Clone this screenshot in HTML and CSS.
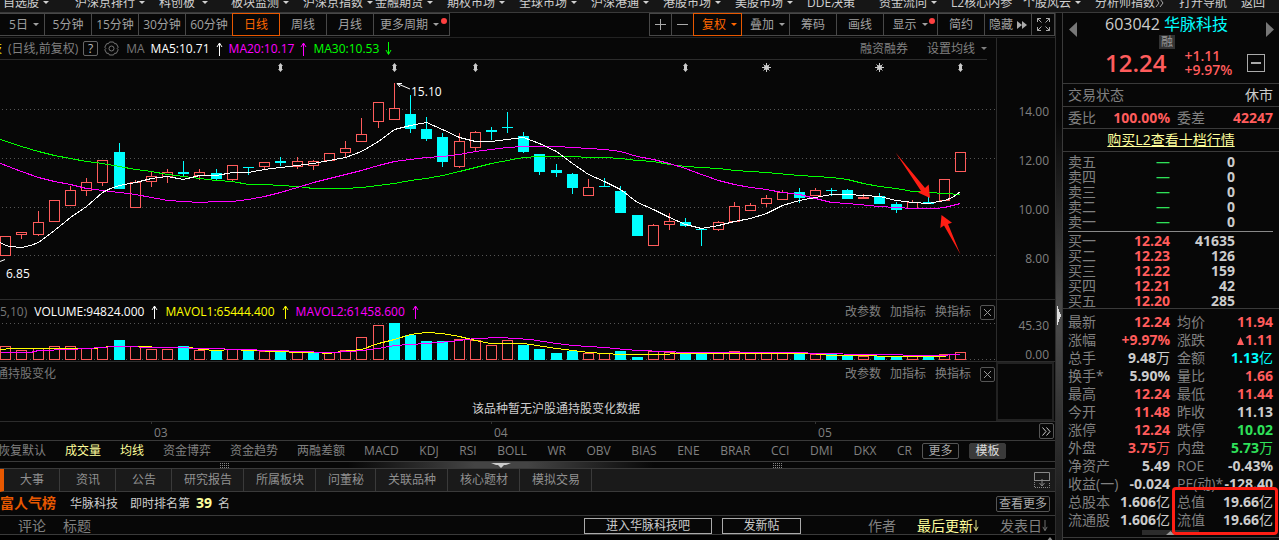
FILE: index.html
```html
<!DOCTYPE html>
<html lang="zh-CN">
<head>
<meta charset="utf-8">
<title>华脉科技 603042</title>
<link rel="stylesheet" href="styles.css">
</head>
<body>
<svg class="defs" aria-hidden="true">
  <symbol id="up" viewBox="0 0 7 14"><path d="M3.5 14V1M3.5 1L1 5M3.5 1L6 5" fill="none" stroke="currentColor"/></symbol>
  <symbol id="down" viewBox="0 0 7 14"><path d="M3.5 0V12M3.5 12.500L1 8M3.500 12.500L6 8" fill="none" stroke="currentColor"/></symbol>
  <symbol id="close" viewBox="0 0 15 15"><rect x=".5" y=".5" width="14" height="14" rx="1.500" fill="none" stroke="#555"/><path d="M4 4L11 11M11 4L4 11" stroke="#999" fill="none"/></symbol>
  <symbol id="grip" viewBox="0 0 9 5"><path d="M0 .5H9M0 2.500H9M0 4.500H9" stroke="#888" stroke-dasharray="1 1"/></symbol>
</svg>

<nav class="menu">
  <button class="drop">自选股</button>
  <button class="drop wide">沪深京排行</button>
  <button class="drop far">科创板</button>
  <button class="drop">板块监测</button>
  <button class="drop">沪深京指数</button>
  <button class="drop">金融期货</button>
  <button class="drop">期权市场</button>
  <button class="drop">全球市场</button>
  <button class="drop">沪深港通</button>
  <button class="drop">港股市场</button>
  <button class="drop">美股市场</button>
  <button>DDE决策</button>
  <button class="drop">资金流向</button>
  <button>L2核心内参</button>
  <button class="drop">个股风云</button>
  <button class="wide">分析师指数<svg width="9" height="8" viewBox="0 0 9 8"><path d="M1 0L4 4L1 8M5 0L8 4L5 8" fill="none" stroke="#aaa"/></svg></button>
  <button class="short">打开导航</button>
  <button class="last">返回</button>
</nav>

<div class="workspace">
<main class="main">
  <div class="toolbar">
    <div class="group periods">
      <button class="drop">5日</button><button>5分钟</button><button>15分钟</button><button>30分钟</button><button>60分钟</button><button class="on">日线</button><button>周线</button><button>月线</button><button class="drop more dot">更多周期</button>
    </div>
    <div class="group tools">
      <button class="zoom" aria-label="放大"><svg width="11" height="11"><path d="M0 5.500H11M5.500 0V11" stroke="#aaa"/></svg></button>
      <button class="zoom" aria-label="缩小"><svg width="11" height="11"><path d="M0 5.500H11" stroke="#aaa"/></svg></button>
      <button class="drop on">复权</button>
      <button class="drop">叠加</button>
      <button>筹码</button>
      <button>画线</button>
      <button class="drop show dot">显示</button>
      <button>简约</button>
      <button>隐藏<svg class="ff" width="10" height="8"><path d="M0 0L5 4L0 8ZM5 0L10 4L5 8Z" fill="#aaa"/></svg></button>
      <button class="full" aria-label="全屏"><svg width="13" height="13" fill="none" stroke="#aaa"><path d="M.5 4V.5H4M.5 .5L4.500 4.500M9 .5H12.500V4M12.500 .5L8.500 4.500M.5 9V12.500H4M.5 12.500L4.500 8.500M9 12.500H12.500V9M12.500 12.500L8.500 8.500"/></svg></button>
    </div>
  </div>

  <section class="pane price">
    <div class="plot">
      <div class="legend">
        <span class="stock yellow">技</span>
        <span class="period">(日线,前复权)</span>
        <button class="help">?</button>
        <button class="gear" aria-label="设置"><svg width="15" height="15" fill="none" stroke="#777"><path d="M5.500 1H9.500L10.500 2.700H12.300L14.200 6.200L13.200 7.500L14.200 8.800L12.300 12.300H10.500L9.500 14H5.500L4.500 12.300H2.700L.8 8.800L1.800 7.500L.8 6.200L2.700 2.700H4.500Z"/><circle cx="7.500" cy="7.500" r="2.500"/></svg></button>
        <span class="muted">MA</span>
        <span class="series white">MA5:10.71<svg width="7" height="14"><use href="#up"/></svg></span>
        <span class="series magenta">MA20:10.17<svg width="7" height="14"><use href="#up"/></svg></span>
        <span class="series green">MA30:10.53<svg width="7" height="14"><use href="#down"/></svg></span>
        <div class="links"><button>融资融券</button><button class="drop">设置均线</button></div>
      </div>
      <svg class="chart" id="candles" height="239">
        <g class="grid">
          <line x1="2" x2="100%" y1="49.500" y2="49.500"/><line x1="2" x2="100%" y1="98.500" y2="98.500"/><line x1="2" x2="100%" y1="147.500" y2="147.500"/><line x1="2" x2="100%" y1="195.500" y2="195.500"/>
        </g>
        <g class="bars"></g>
        <g class="lines"></g>
        <g class="marks"></g>
        <path d="M0 201.500L5 199.500" stroke="#fff"/>
        <text x="6" y="218">6.85</text>
        <path d="M397 23.500L410 29M397 23.500H402M397 23.500L400 27" stroke="#fff" fill="none"/>
        <text x="411" y="36">15.10</text>
        <path class="pointer" d="M895.500 92.500L925 128L928.700 124.500L930 138L918 132.500L921 131Z"/>
        <path class="pointer" d="M941.500 155L952 162.700L948 164L960.500 194.500L944 165.500L940.300 168Z"/>
      </svg>
    </div>
    <div class="axis price-axis"><span>14.00</span><span>12.00</span><span>10.00</span><span>8.00</span></div>
  </section>

  <section class="pane volume">
    <div class="plot">
      <div class="legend">
        <span class="muted">5,10)</span>
        <span class="series white">VOLUME:94824.000<svg width="7" height="14"><use href="#up"/></svg></span>
        <span class="series yellow">MAVOL1:65444.400<svg width="7" height="14"><use href="#up"/></svg></span>
        <span class="series magenta">MAVOL2:61458.600<svg width="7" height="14"><use href="#up"/></svg></span>
        <div class="links tight"><button>改参数</button><button>加指标</button><button>换指标</button><button class="close" aria-label="关闭"><svg width="15" height="15"><use href="#close"/></svg></button></div>
      </div>
      <svg class="chart" id="volumes" height="38">
        <g class="grid"><line x1="2" x2="100%" y1=".5" y2=".5"/><line x1="2" x2="100%" y1="36.500" y2="36.500"/></g>
        <g class="bars"></g>
        <g class="lines"></g>
      </svg>
    </div>
    <div class="axis volume-axis"><span>45.30</span><span>0.00</span></div>
  </section>

  <section class="pane holding">
    <div class="plot">
      <div class="legend">
        <span class="muted cut">通持股变化</span>
        <div class="links tight"><button>改参数</button><button>加指标</button><button>换指标</button><button class="close" aria-label="关闭"><svg width="15" height="15"><use href="#close"/></svg></button></div>
      </div>
      <p class="empty">该品种暂无沪股通持股变化数据</p>
    </div>
    <div class="axis blank"></div>
  </section>

  <div class="dates">
    <span class="march">03</span><span class="april">04</span><span class="may">05</span>
    <button aria-label="后移"><svg width="9" height="9"><path d="M.5 .5L4 4.500L.5 8.500M4.500 .5L8 4.500L4.500 8.500" fill="none" stroke="#ccc"/></svg></button>
  </div>

  <div class="indicators">
    <button>恢复默认</button><button class="sel">成交量</button><button class="sel">均线</button><button>资金博弈</button><button>资金趋势</button><button>两融差额</button>
    <div class="formulas"><button>MACD</button><button>KDJ</button><button>RSI</button><button>BOLL</button><button>WR</button><button>OBV</button><button>BIAS</button><button>ENE</button><button>BRAR</button><button>CCI</button><button>DMI</button><button>DKX</button><button>CR</button></div>
    <button class="boxed">更多</button><button class="boxed filled">模板</button>
  </div>

  <div class="splitter">
    <svg width="9" height="5"><use href="#grip"/></svg>
    <svg width="20" height="5"><path d="M0 0H20L15 2H13L10 5L7 2H5Z" fill="#ccc"/></svg>
    <svg width="9" height="5"><use href="#grip"/></svg>
  </div>

  <div class="tabs">
    <button>大事</button><button>资讯</button><button>公告</button><button>研究报告</button><button>所属板块</button><button>问董秘</button><button>关联品种</button><button>核心题材</button><button>模拟交易</button>
    <button class="dock" aria-label="收起"><svg width="16" height="16" fill="none" stroke="#888"><path d="M.5 9V.5H15.500V9M0 8.500H16M8 7V14M5.500 11L8 14L10.500 11"/><path d="M.5 10V15.500H15.500V10" stroke-dasharray="1 1"/></svg></button>
  </div>

  <div class="rank">
    <strong class="board">富人气榜</strong><span>华脉科技</span><span>即时排名第<b>39</b>名</span>
    <button>查看更多</button>
  </div>

  <div class="posts">
    <span>评论</span><span>标题</span>
    <div class="post-actions"><button class="enter">进入华脉科技吧</button><button class="new">发新帖</button></div>
    <div class="sorts"><button>作者</button><button class="sel">最后更新<svg width="6" height="12" viewBox="0 0 7 14"><use href="#down"/></svg></button><button>发表日<svg width="6" height="12" viewBox="0 0 7 14"><use href="#down"/></svg></button></div>
  </div>
  <div class="list"><svg width="8" height="5"><path d="M4 0L8 5H0Z" fill="#888"/></svg></div>
</main>

<div class="divider"><svg width="4" height="19"><path d="M0 0H1V3H2V6H3V8H4V11H3V13H2V16H1V19H0Z" fill="#ddd"/></svg></div>

<aside class="quote">
  <header>
    <button class="prev" aria-label="上一只"><svg width="8" height="15"><path d="M8 0V15L0 7.500Z" fill="#777"/></svg></button>
    <div class="head">
      <div class="name">603042 <span>华脉科技</span></div>
      <div class="tag"><span>融</span></div>
      <div class="now"><strong>12.24</strong><div class="change"><div>+1.11</div><div>+9.97%</div></div><button aria-label="移除"><svg width="10" height="2"><path d="M0 1H10" stroke="#aaa" stroke-width="2"/></svg></button></div>
    </div>
    <button class="next" aria-label="下一只"><svg width="8" height="15"><path d="M0 0V15L8 7.500Z" fill="#777"/></svg></button>
  </header>
  <div class="row state"><span>交易状态</span><span class="val">休市</span></div>
  <table class="pairs row ratio"><tr><th>委比</th><td class="up">100.00%</td><th>委差</th><td class="up">42247</td></tr></table>
  <div class="row buy-l2"><a href="#">购买L2查看十档行情</a></div>
  <table class="book asks">
    <tr><th>卖五</th><td class="down none">—</td><td>0</td></tr>
    <tr><th>卖四</th><td class="down none">—</td><td>0</td></tr>
    <tr><th>卖三</th><td class="down none">—</td><td>0</td></tr>
    <tr><th>卖二</th><td class="down none">—</td><td>0</td></tr>
    <tr><th>卖一</th><td class="down none">—</td><td>0</td></tr>
  </table>
  <hr>
  <table class="book bids">
    <tr><th>买一</th><td class="up">12.24</td><td>41635</td></tr>
    <tr><th>买二</th><td class="up">12.23</td><td>126</td></tr>
    <tr><th>买三</th><td class="up">12.22</td><td>159</td></tr>
    <tr><th>买四</th><td class="up">12.21</td><td>42</td></tr>
    <tr><th>买五</th><td class="up">12.20</td><td>285</td></tr>
  </table>
  <div class="stats">
    <table class="pairs">
      <tr><th>最新</th><td class="up">12.24</td><th>均价</th><td class="up">11.94</td></tr>
      <tr><th>涨幅</th><td class="up">+9.97%</td><th>涨跌</th><td class="up"><svg width="8" height="8"><path d="M3.500 0L7 8H0Z" fill="currentColor"/></svg>1.11</td></tr>
      <tr><th>总手</th><td>9.48<i>万</i></td><th>金额</th><td class="cyan">1.13<i>亿</i></td></tr>
      <tr><th>换手*</th><td>5.90%</td><th>量比</th><td class="up">1.66</td></tr>
      <tr><th>最高</th><td class="up">12.24</td><th>最低</th><td class="up">11.44</td></tr>
      <tr><th>今开</th><td class="up">11.48</td><th>昨收</th><td>11.13</td></tr>
      <tr><th>涨停</th><td class="up">12.24</td><th>跌停</th><td class="down">10.02</td></tr>
      <tr><th>外盘</th><td class="up">3.75<i>万</i></td><th>内盘</th><td class="down">5.73<i>万</i></td></tr>
      <tr><th>净资产</th><td>5.49</td><th>ROE</th><td>-0.43%</td></tr>
      <tr><th>收益(一)</th><td>-0.024</td><th>PE(动)*</th><td>-128.40</td></tr>
      <tr><th>总股本</th><td>1.606<i>亿</i></td><th>总值</th><td>19.66<i>亿</i></td></tr>
      <tr><th>流通股</th><td>1.606<i>亿</i></td><th>流值</th><td>19.66<i>亿</i></td></tr>
    </table>
    <div class="expander"><svg width="9" height="4"><path d="M4.500 0L9 4H0Z" fill="#999"/></svg></div>
    <div class="highlight"></div>
  </div>
</aside>
</div>
<script src="chart.js"></script>
</body>
</html>
```

FILE: styles.css
```css
* { box-sizing: border-box; }
body {
  margin: 0;
  min-height: 100vh;
  display: flex;
  flex-direction: column;
  overflow: hidden;
  background: #070707;
  color: #808080;
  font: 12px/14px "Open Sans", "Noto Sans CJK SC", sans-serif;
}
button {
  margin: 0;
  padding: 0;
  border: 0;
  background: none;
  color: inherit;
  font: inherit;
  white-space: nowrap;
}
svg { flex: none; }
table { border-collapse: collapse; }
.defs { position: absolute; width: 0; height: 0; }

.drop::after {
  content: "";
  display: inline-block;
  margin-left: 6px;
  vertical-align: 3px;
  border: 3px solid transparent;
  border-top-color: currentColor;
  border-bottom: 0;
}
.white { color: #fff; }
.magenta { color: #f0f; }
.green { color: #0f0; }
.yellow { color: #ff0; }
.cyan { color: #0ff; }
.muted { color: #777; }
.sel { color: #ffff9c; }

/* Top menu */
.menu {
  display: flex;
  align-items: flex-end;
  height: 13px;
  padding: 0 0 2px 3px;
  overflow: hidden;
  background: #161616;
  border-bottom: 1px solid #3a3a3a;
  color: #d0d0d0;
}
.menu button { flex: none; width: 72px; text-align: left; }
.menu .drop::after { margin-left: 4px; }
.menu .far::after { margin-left: 7px; }
.menu .wide { width: 84px; }
.menu .short { width: 62px; }
.menu .last { width: 36px; }

.workspace { flex: 1; display: flex; min-height: 0; }
.main { flex: 1; min-width: 0; display: flex; flex-direction: column; border-right: 1px solid #2c2c2c; }

/* Toolbar */
.toolbar {
  display: flex;
  justify-content: space-between;
  padding-bottom: 1px;
  border-bottom: 1px solid #222;
}
.group { display: flex; }
.group button {
  position: relative;
  display: flex;
  align-items: center;
  justify-content: center;
  width: 47px;
  line-height: 21px;
  border: 1px solid #484848;
  border-left-width: 0;
  color: #a0a0a0;
}
.periods button:first-child { width: 45px; }
.group .drop { padding-left: 4px; }
.group .drop::after { margin-left: 5px; }
.group .more { width: 76px; padding-left: 0; }
.group .more::after { margin-right: 4px; }
.tools .zoom { width: 22px; }
.tools .zoom:first-child { width: 23px; border-left-width: 1px; }
.tools .drop { width: 48px; }
.tools .show { width: 54px; }
.tools .show::after { margin-right: 5px; }
.tools .full { width: 23px; }
.ff { margin-left: 4px; }
.group .on {
  color: #f60;
  border-color: #e85800;
  box-shadow: -1px 0 #e85800;
}
.group .dot::before {
  content: "";
  position: absolute;
  top: 4px;
  right: 2px;
  width: 6px;
  height: 6px;
  border-radius: 3px;
  background: #ff4040;
}

/* Chart panes */
.pane { display: grid; grid-template-columns: minmax(0, 1fr) 59px; border-bottom: 1px solid #2c2c2c; }
.plot { min-width: 0; overflow: hidden; }
.legend { display: flex; align-items: center; padding-top: 1px; line-height: 22px; white-space: nowrap; }
.price .legend { margin-right: 9px; padding-top: 0; line-height: 21px; border-bottom: 1px solid #2c2c2c; }
.stock { margin: 0 6px 0 -10px; }
.period { margin-right: 5px; }
.help { width: 15px; line-height: 13px; border: 1px solid #666; border-radius: 2px; color: #bbb; }
.gear { display: flex; margin: 0 7px 0 6px; }
.series { display: flex; align-items: center; gap: 6px; margin-left: 6px; }
.volume .series { gap: 7px; margin-left: 7px; }
.links { display: flex; align-items: center; gap: 19px; margin-left: auto; }
.links.tight { gap: 9px; margin-right: 1px; }
.close { display: flex; }
.cut { margin-left: -4px; }
.chart { display: block; width: 100%; }
.chart text { fill: #fff; font-size: 12px; }
.grid line { stroke: #555; stroke-dasharray: 1 3; }
.chart .bars, .chart .lines { shape-rendering: crispEdges; }
.chart .lines { fill: none; }
.chart .rise { fill: #070707; stroke: #ff5c5c; }
.chart .fall { fill: #0ff; stroke: #0ff; }
.chart .marks { fill: #ccc; stroke: #ccc; }
.pointer { fill: #ff1e14; }
.axis { display: flex; flex-direction: column; align-items: flex-end; padding-right: 6px; border-left: 1px solid #2c2c2c; }
.price-axis { gap: 35px; padding-top: 67px; }
.volume-axis { gap: 16px; padding-top: 19px; line-height: 13px; }
.blank { border: 2px solid #222; margin-right: 1px; }
.empty { margin: 17px 0 5px; padding-left: 116px; text-align: center; color: #ccc; }

/* Date ruler and indicator strip */
.dates {
  display: flex;
  padding: 0 1px 0 151px;
  border-bottom: 1px solid #3a3a3a;
}
.dates span { padding: 4px 0 0 3px; background: linear-gradient(#333, #333) no-repeat 0 0 / 1px 2px; }
.march { flex: 340; }
.april { flex: 324; }
.may { flex: 223; }
.dates button { display: flex; align-items: center; justify-content: center; align-self: center; width: 15px; height: 16px; border: 1px solid #555; border-radius: 2px; }
.indicators {
  display: flex;
  align-items: center;
  gap: 19px;
  padding: 2px 0;
  overflow: hidden;
  border-bottom: 1px solid #3a3a3a;
}
.indicators button { flex: none; line-height: 14px; }
.indicators > button:first-child { margin-left: -2px; }
.formulas { display: flex; flex: 0 0 548px; justify-content: space-between; }
.indicators .boxed { width: 37px; margin-left: -9px; border: 1px solid #555; border-radius: 2px; color: #aaa; }
.indicators .filled { background: #3a3a3a; border-color: #3a3a3a; color: #ddd; }
.splitter {
  display: flex;
  justify-content: space-between;
  padding: 1px 273px 0 220px;
  border-bottom: 1px solid #3a3a3a;
  background: linear-gradient(90deg, transparent 33%, #444 45%, #444 50%, transparent 62%);
}

/* Lower tabs */
.tabs { display: flex; background: #1a1a1a; border-left: 4px solid #e85800; border-bottom: 1px solid #3a3a3a; }
.tabs button { min-width: 56px; padding: 0 11px 0 12px; line-height: 22px; border-right: 1px solid #3a3a3a; color: #909090; }
.tabs .dock { display: flex; align-items: center; min-width: 0; margin-left: auto; padding: 0 5px; border: 0; }
.rank { display: flex; align-items: center; gap: 12px; line-height: 22px; border-bottom: 1px solid #3a3a3a; color: #ccc; }
.board { margin-right: 2px; font: bold 14px/22px "Liberation Serif", "Noto Sans CJK SC", sans-serif; color: #e85800; }
.rank b { margin: 0 6px; font-size: 14px; color: #ffff9c; }
.rank button { margin: 0 5px 0 auto; padding: 0 2px; line-height: 14px; border: 1px solid #555; border-radius: 2px; color: #aaa; }
.posts { display: flex; align-items: center; gap: 17px; padding: 2px 7px 0 18px; font-size: 14px; line-height: 16px; border-bottom: 1px solid #3a3a3a; }
.post-actions { display: flex; gap: 10px; margin-left: auto; font-size: 12px; }
.post-actions button { line-height: 14px; border: 1px solid #aaa; color: #ccc; }
.enter { width: 128px; }
.new { width: 79px; }
.sorts { display: flex; gap: 21px; margin-left: 50px; }
.sorts button { display: flex; align-items: center; }
.list { flex: 1; display: flex; align-items: flex-start; justify-content: flex-end; padding: 2px 1px 0; background: #000; }

/* Divider between chart and quote */
.divider {
  display: flex;
  width: 6px;
  padding: 293px 0 0 1px;
  background: linear-gradient(#070707 20%, #484848 55%, #484848 60%, #1a1a1a 95%);
}

/* Quote panel */
.quote { width: 217px; font-size: 14px; border-left: 1px solid #3a3a3a; }
.quote header { display: flex; padding-bottom: 6px; border-bottom: 1px solid #3a3a3a; }
.quote header > button { display: flex; width: 8px; margin-top: 9px; }
.quote header > .prev { margin-left: 6px; }
.quote header > .next { margin-right: 5px; }
.head { flex: 1; }
.name { padding-left: 28px; font-size: 16px; line-height: 22px; color: #ccc; white-space: nowrap; }
.name span { color: #0ff; }
.tag { padding-left: 82px; font-size: 12px; line-height: 14px; }
.tag span { display: block; width: 16px; text-align: center; background: #333; color: #999; }
.now { display: flex; align-items: center; padding-left: 28px; color: #ff5c5c; }
.now strong { font-size: 24px; line-height: 28px; font-weight: 600; }
.change { width: 63px; margin-left: 18px; font-weight: 600; }
.now button { display: flex; align-items: center; justify-content: center; width: 18px; height: 18px; border: 1px solid #aaa; }
.row { line-height: 22px; border-bottom: 1px solid #3a3a3a; }
.state { display: flex; justify-content: space-between; padding: 0 6px 0 5px; }
.val { color: #ccc; }
.buy-l2 { text-align: center; }
.buy-l2 a { color: #ffff9c; }
.quote th { padding: 0; font-weight: normal; text-align: left; white-space: nowrap; }
.quote td { padding: 0; font-weight: bold; text-align: right; color: #ccc; white-space: nowrap; }
.quote td i { font-style: normal; font-weight: normal; }
.quote .none { font-weight: normal; }
.quote .up { color: #ff5c5c; }
.quote .down { color: #2fe05a; }
.quote .cyan { color: #0ff; }
.quote .pairs { width: 100%; table-layout: fixed; line-height: 18px; }
.pairs th { width: 50px; }
.pairs td { width: 57px; }
.pairs th + td + th { width: 49px; }
.pairs td:last-child { width: 60px; }
.quote tr th:first-child { padding-left: 5px; }
.quote .pairs th + td + th { padding-left: 7px; }
.quote .pairs td:last-child { padding-right: 6px; }
.quote .ratio { line-height: 21px; }
.book { width: 172px; table-layout: fixed; line-height: 15px; }
.book th { width: 50px; }
.book td { width: 57px; }
.book td:last-child { width: 65px; }
.asks { margin: 2px 0; }
.bids { margin-top: 1px; }
.quote hr { margin: 0 6px 0 5px; border: 0; border-top: 1px solid #888; }
.stats { position: relative; padding-top: 4px; border-top: 1px solid #3a3a3a; border-bottom: 1px solid #3a3a3a; }
.expander { display: flex; justify-content: center; width: 57px; margin: 1px auto 2px 79px; padding-top: 1px; background: #2c2c2c; }
.highlight { position: absolute; right: 1px; bottom: 2px; width: 106px; height: 48px; border: 3px solid #ff1e14; border-radius: 4px; }
```

FILE: chart.js
```javascript
// One row per day: x, high, body top, body bottom, low, price colour, volume top, volume colour
const days = [
  [5,176,176,195,195,'r',46,'r'],[21,172,172,174,178,'r',50,'r'],[38,151,162,174,175,'r',48,'r'],
  [54,140,140,161,161,'r',46,'r'],[70,126,130,145,145,'r',46,'r'],[86,118,122,130,135,'r',48,'r'],
  [102,100,100,122,125,'r',47,'r'],[119,83,92,128,128,'c',40,'c'],[135,120,122,147,147,'r',46,'r'],
  [151,112,116,121,126,'r',49,'r'],[167,109,112,116,122,'r',49,'r'],[183,101,112,113,115,'c',46,'c'],
  [199,109,112,115,119,'r',50,'r'],[216,109,113,118,119,'c',50,'c'],[232,105,105,119,121,'r',49,'r'],
  [248,107,107,107,114,'c',50,'c'],[264,102,102,106,108,'r',51,'r'],[280,97,101,102,105,'c',50,'c'],
  [297,97,101,106,108,'r',52,'r'],[313,100,101,105,109,'r',53,'c'],[329,93,93,100,100,'r',52,'r'],
  [345,81,88,92,96,'r',50,'r'],[361,58,74,81,81,'r',37,'r'],[378,42,42,61,67,'r',25,'r'],
  [394,23,48,59,59,'r',23,'c'],[410,35,54,68,72,'c',35,'c'],[426,57,69,78,80,'c',41,'c'],
  [442,73,77,101,106,'c',41,'c'],[459,73,81,106,107,'r',39,'r'],[475,71,72,87,90,'r',40,'r'],
  [491,67,70,71,79,'c',45,'r'],[507,52,67,67,72,'c',40,'r'],[523,72,76,91,92,'c',45,'c'],
  [539,94,94,111,114,'c',49,'c'],[556,104,110,112,116,'c',53,'c'],[572,113,114,127,133,'c',51,'c'],
  [588,119,127,135,135,'r',53,'r'],[604,118,126,126,126,'c',53,'r'],[620,126,131,152,152,'c',51,'c'],
  [637,155,155,175,175,'c',57,'c'],[653,164,165,185,185,'r',51,'r'],[669,153,161,164,169,'r',52,'r'],
  [685,158,162,165,166,'c',54,'c'],[701,169,169,169,185,'c',53,'c'],[718,161,162,169,170,'r',53,'r'],
  [734,142,146,161,161,'r',51,'r'],[750,143,145,150,150,'r',53,'r'],[766,135,138,143,146,'r',52,'r'],
  [782,130,132,139,139,'r',53,'r'],[799,128,132,137,142,'c',53,'c'],[815,128,130,135,135,'r',54,'r'],
  [831,128,130,130,135,'c',54,'c'],[847,129,130,138,138,'c',55,'c'],[863,134,137,138,138,'r',56,'r'],
  [879,133,136,143,143,'c',56,'c'],[896,142,144,149,152,'c',56,'c'],[912,140,142,148,148,'r',55,'r'],
  [928,137,142,143,143,'c',55,'c'],[944,119,119,140,140,'r',54,'r'],[960,92,92,111,111,'r',52,'r']
];

const priceLines = {
  '#0f0': '0,79 21,86 38,91 54,95 70,98 86,101 102,103 119,106 135,109 151,111 167,114 183,116 199,118 216,120 232,121 248,124 264,124 280,125 297,126 313,128 345,128 361,127 378,125 394,123 410,120 426,118 442,115 459,111 475,107 491,103 507,100 523,97 539,96 572,96 588,97 604,97 620,98 637,100 653,101 669,104 685,106 718,108 734,110 766,112 799,115 831,117 847,119 863,123 879,126 896,128 912,131 944,133 960,134',
  '#f0f': '0,103 21,111 38,117 54,121 70,124 86,128 102,130 119,132 135,134 151,137 167,140 183,141 199,142 216,141 232,141 248,139 264,136 280,132 297,127 313,122 329,118 361,110 378,105 394,101 410,99 426,97 442,96 459,94 475,91 491,89 507,87 523,86 556,86 572,87 588,88 604,89 620,91 637,96 653,99 669,103 685,108 701,114 718,120 734,124 750,127 766,129 782,132 799,134 815,138 831,142 847,143 879,146 896,147 912,148 935,148 944,147 960,143',
  '#fff': '0,182 5,185 10,186 21,187 30,185 38,182 54,170 70,157 86,146 102,132 110,128 119,125 135,122 151,118 167,116 183,119 199,115 216,115 232,112 248,112 264,109 280,107 297,105 313,103 329,100 345,97 361,91 378,81 394,69 410,65 426,62 442,69 459,77 475,81 491,81 507,79 523,77 539,83 556,91 572,103 588,114 604,121 620,129 637,142 653,149 669,157 685,164 701,168 718,165 734,161 750,158 766,153 782,145 799,140 815,137 831,134 847,134 863,135 879,136 896,140 912,142 928,143 944,140 952,137 960,131'
};
const volumeLines = {
  '#ff0': '0,49 12,48 94,48 110,46 142,46 160,47 190,47 200,49 216,50 232,49 248,50 280,51 297,52 313,52 329,53 340,51 361,49 378,43 394,39 410,34 426,32 442,33 459,36 475,40 490,43 523,43 530,44 556,48 572,50 588,52 604,53 620,54 660,54 680,53 810,53 831,55 872,55 880,56 945,56',
  '#f0f': '0,52 30,52 38,50 70,49 86,48 115,46 160,47 216,48 232,49 280,50 297,51 329,52 350,51 361,50 378,48 394,45 426,43 450,41 475,38 500,37 530,39 556,43 572,45 604,47 625,49 637,50 665,51 685,52 800,52 815,53 870,54 935,55 960,54'
};

function add(parent, tag, attrs) {
  const el = document.createElementNS('http://www.w3.org/2000/svg', tag);
  for (const key in attrs) el.setAttribute(key, attrs[key]);
  parent.appendChild(el);
}
function box(parent, x, top, bottom, colour) {
  add(parent, 'rect', { x: x - 4.5, y: top + 0.5, width: 10, height: Math.max(bottom - top, 0.01), class: colour === 'r' ? 'rise' : 'fall' });
}
function lines(parent, set, shift) {
  for (const colour in set) {
    const points = set[colour].split(' ').map(p => p.split(',').map(Number)).map(([x, y]) => `${x + 0.5},${y + 0.5 - shift}`).join(' ');
    add(parent, 'polyline', { points, stroke: colour });
  }
}

const legendHeight = 23;
const price = document.querySelector('#candles .bars');
const volume = document.querySelector('#volumes .bars');
for (const [x, high, top, bottom, low, colour, volTop, volColour] of days) {
  add(price, 'path', { d: `M${x + 0.5} ${high}V${low + 1}`, class: colour === 'r' ? 'rise' : 'fall' });
  box(price, x, top, bottom, colour);
  box(volume, x, volTop - legendHeight, 59 - legendHeight, volColour);
}
lines(document.querySelector('#candles .lines'), priceLines, 0);
lines(document.querySelector('#volumes .lines'), volumeLines, legendHeight);

const marks = document.querySelector('#candles .marks');
for (const x of [280, 394, 475, 685, 960]) {
  add(marks, 'path', { d: `M${x + 0.5} 3L${x + 3} 6H${x + 2}V9H${x + 3}L${x + 0.5} 12L${x - 2} 9H${x - 1}V6H${x - 2}Z`, 'stroke-width': 0 });
}
for (const x of [766, 879]) {
  add(marks, 'circle', { cx: x + 0.5, cy: 7.5, r: 2.5, 'stroke-width': 0 });
  add(marks, 'path', { d: `M${x - 4} 7.5H${x + 5}M${x + 0.5} 3V12M${x - 2.5} 4.5L${x + 3.5} 10.5M${x + 3.5} 4.5L${x - 2.5} 10.5` });
}
```
